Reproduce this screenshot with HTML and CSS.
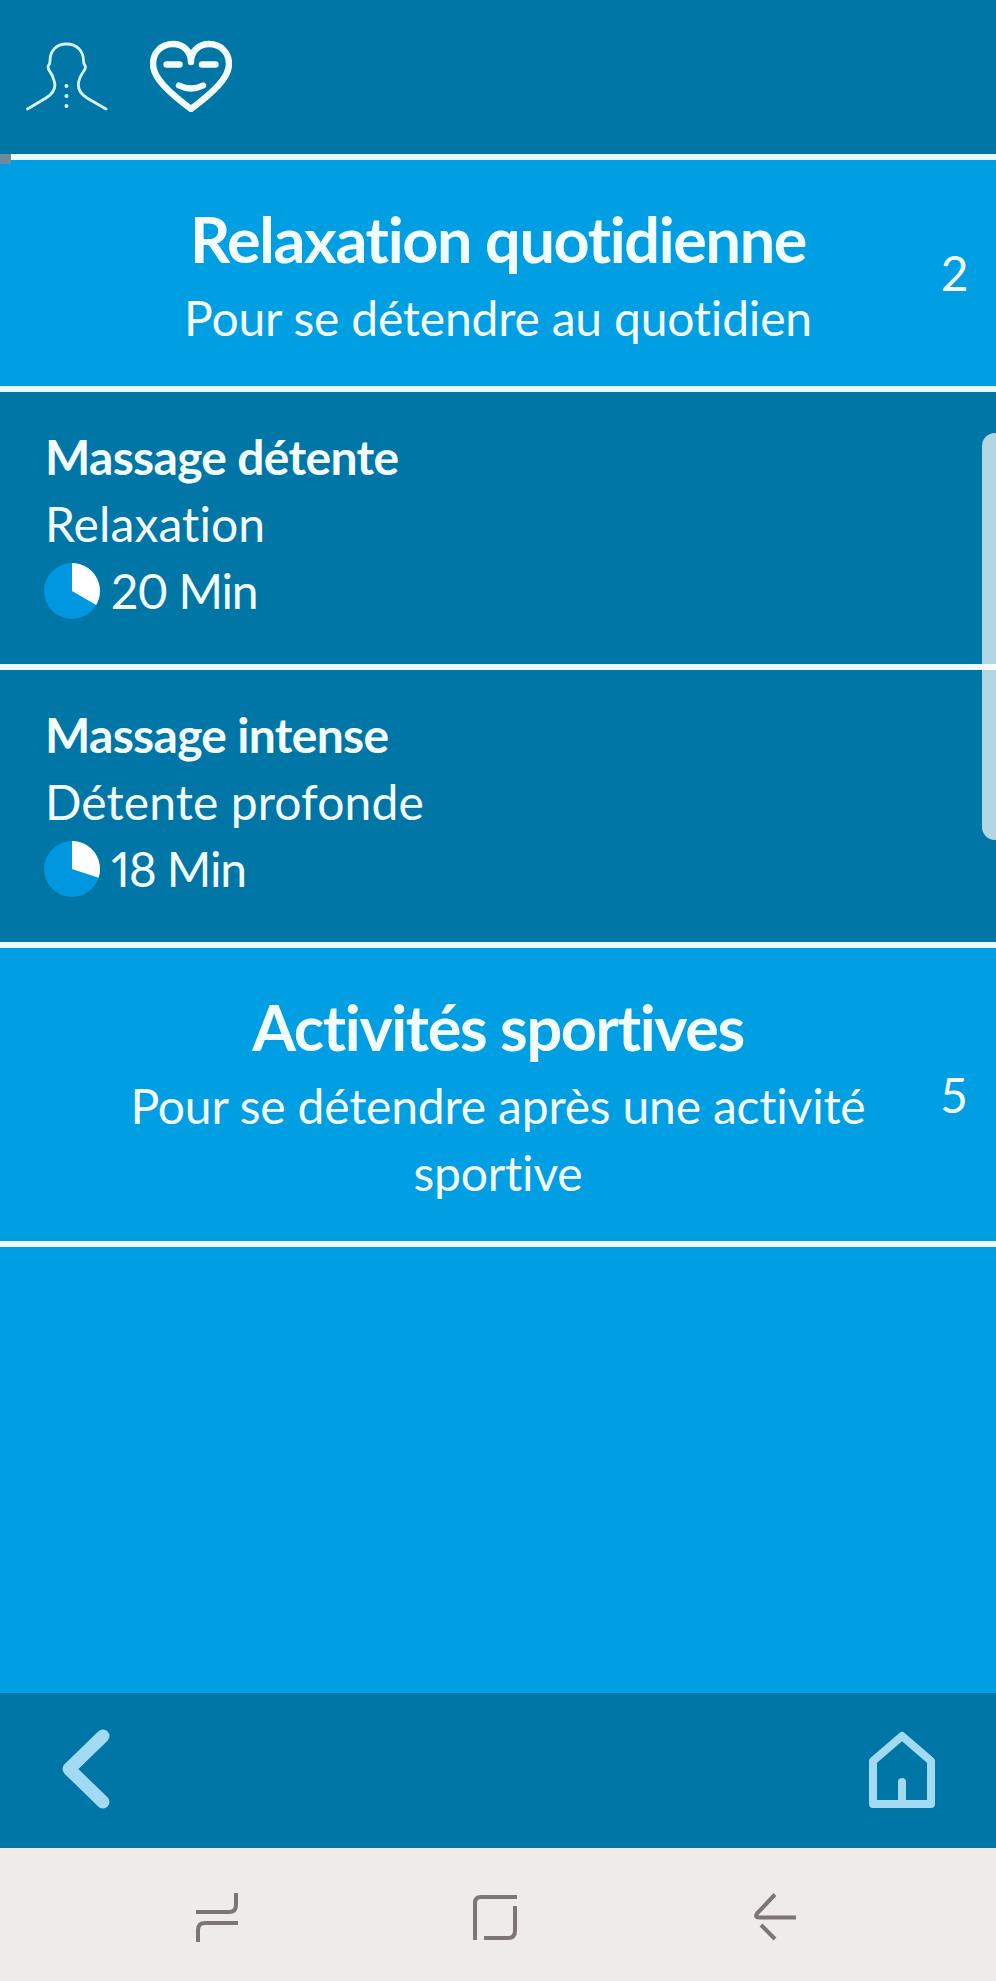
FILE: index.html
```html
<!DOCTYPE html>
<html lang="fr">
<head>
    <meta charset="UTF-8">
    <meta name="viewport" content="width=device-width, initial-scale=1.0">
    <title>Massages</title>
    <link rel="stylesheet" href="styles.css">
</head>
<body>
    <header class="top-bar">
        <svg class="icon-body" viewBox="0 0 84 72" width="84" height="72">
            <path d="M1.5 69 L20 58 C28 53 31 47 27.5 39 C26.500 33 22 31 22 27 C22 25 24 25 24 21 C24 11 30 4 40.5 4 C51 4 57.5 11 57.5 21 C57.5 25 59.5 25 59.5 27 C59.5 31 55 33 53.5 39 C50.5 47 53 53 61 58 L80 69"/>
            <circle cx="40.5" cy="46" r="2"/>
            <circle cx="40.5" cy="56" r="2"/>
            <circle cx="40.5" cy="66" r="2"/>
        </svg>
        <svg class="icon-heart" viewBox="0 0 82 72" width="82" height="72">
            <path d="M41 22 C41 11 33 4 23 4 C11 4 3 13 3 24 C3 37 17 51 41 69 C65 51 79 37 79 24 C79 13 71 4 59 4 C49 4 41 11 41 22"/>
            <path d="M16.5 24.5 H29.5 M52 24.5 H65.5 M29 45.500 Q41 51.500 53 45.500"/>
        </svg>
        <span class="progress"></span>
    </header>

    <main class="list">
        <section class="category">
            <div class="category-text">
                <h2>Relaxation quotidienne</h2>
                <p>Pour se détendre au quotidien</p>
            </div>
            <span class="count">2</span>
        </section>

        <article class="massage">
            <h3>Massage détente</h3>
            <p>Relaxation</p>
            <p class="duration">
                <svg class="pie" viewBox="0 0 56 56" width="56" height="56">
                    <circle cx="28" cy="28" r="28"/>
                    <path d="M28 28 V0 A28 28 0 0 1 52.2 42 Z"/>
                </svg>
                <span>20 Min</span>
            </p>
        </article>

        <article class="massage">
            <h3>Massage intense</h3>
            <p>Détente profonde</p>
            <p class="duration">
                <svg class="pie" viewBox="0 0 56 56" width="56" height="56">
                    <circle cx="28" cy="28" r="28"/>
                    <path d="M28 28 V0 A28 28 0 0 1 54.6 36.7 Z"/>
                </svg>
                <span>18 Min</span>
            </p>
        </article>

        <section class="category">
            <div class="category-text">
                <h2>Activités sportives</h2>
                <p>Pour se détendre après une activité sportive</p>
            </div>
            <span class="count">5</span>
        </section>

        <span class="scrollbar"></span>
    </main>

    <footer class="bottom-bar">
        <svg class="icon-back" viewBox="0 0 48 80" width="48" height="80">
            <path d="M41 7 L7 40 L41 73"/>
        </svg>
        <svg class="icon-home" viewBox="0 0 68 78" width="68" height="78">
            <path d="M5 74 V31 L34 6 L63 31 V74 Z M34 74 V52"/>
        </svg>
    </footer>

    <nav class="system-nav">
        <svg viewBox="0 0 50 50" width="50" height="50">
            <path d="M4 20 H37 Q44 20 44 13 V1 M46 31 H13 Q6 31 6 38 V50"/>
        </svg>
        <svg viewBox="0 0 50 50" width="50" height="50">
            <path d="M5 48 V11 Q5 5 11 5 H47 M45 14 V39 Q45 46 38 46 H14"/>
        </svg>
        <svg viewBox="0 0 50 50" width="50" height="50">
            <path d="M27 2.5 L9 21.5 Q6.5 25.5 11 25.5 H48 M13 33 L27 47"/>
        </svg>
    </nav>
</body>
</html>
```
FILE: styles.css
```css
:root {
    --dark: #0076a6;
    --bright: #009ee3;
    --line: #ebfbff;
    --text: #f3fdff;
    --icon: #a3daf3;
}

* {
    margin: 0;
    padding: 0;
    box-sizing: border-box;
}

body {
    display: flex;
    flex-direction: column;
    height: 100vh;
    background: var(--bright);
    color: var(--text);
    font-family: Lato, 'Open Sans', sans-serif;
    font-size: 48px;
    line-height: 67px;
    letter-spacing: -0.2px;
    font-variant-numeric: proportional-nums;
    overflow: hidden;
}

svg {
    display: block;
    flex: none;
    fill: none;
    stroke-linejoin: round;
}

/* Top bar */
.top-bar {
    position: relative;
    z-index: 1;
    display: flex;
    flex: none;
    gap: 40px;
    height: 160px;
    padding: 40px 26px 0;
    background: var(--dark);
    border-bottom: 6px solid var(--line);
}

.icon-body {
    stroke: #d8f6ff;
    stroke-width: 2.8;
    stroke-linecap: round;
}

.icon-body circle {
    fill: #d8f6ff;
    stroke: none;
}

.icon-heart {
    stroke: var(--text);
    stroke-width: 6.4;
    stroke-linecap: round;
}

.progress {
    position: absolute;
    left: 0;
    bottom: -10px;
    width: 11px;
    height: 10px;
    background: #6c8b9c;
}

/* List */
.list {
    position: relative;
    flex: 1;
}

.category {
    display: flex;
    align-items: center;
    padding: 34px 29px 35px 110px;
    background: var(--bright);
    border-bottom: 6px solid var(--line);
}

.category-text {
    flex: 1;
    margin-right: 55px;
    text-align: center;
}

.category h2 {
    font-size: 63px;
    line-height: 90px;
    letter-spacing: -1.4px;
}

.count {
    width: 26px;
    text-align: center;
}

.massage {
    padding: 31px 44px 40px 45px;
    background: var(--dark);
    border-bottom: 6px solid var(--line);
    letter-spacing: 0.1px;
}

.massage h3 {
    font-size: 48px;
    letter-spacing: -0.7px;
}

.duration {
    display: flex;
    align-items: center;
    gap: 11px;
    height: 67px;
    letter-spacing: -1.2px;
}

.pie {
    margin-left: -1px;
}

.pie circle {
    fill: #0096e0;
}

.pie path {
    fill: #fff;
}

.scrollbar {
    position: absolute;
    top: 273px;
    right: 0;
    width: 14px;
    height: 407px;
    background: rgba(255, 255, 255, 0.7);
    border-radius: 13px 0 0 13px;
}

/* Bottom bar */
.bottom-bar {
    display: flex;
    flex: none;
    align-items: center;
    justify-content: space-between;
    height: 155px;
    padding: 0 60px 4px 62px;
    background: var(--dark);
    stroke: var(--icon);
}

.icon-back {
    stroke-width: 13;
    stroke-linecap: round;
}

.icon-home {
    stroke-width: 8;
    stroke-linecap: round;
}

/* Android navigation */
.system-nav {
    display: flex;
    flex: none;
    align-items: center;
    justify-content: space-between;
    height: 133px;
    padding: 5px 198px 0 192px;
    background: #efebe8;
    stroke: #7d7674;
    stroke-width: 4;
}
```
